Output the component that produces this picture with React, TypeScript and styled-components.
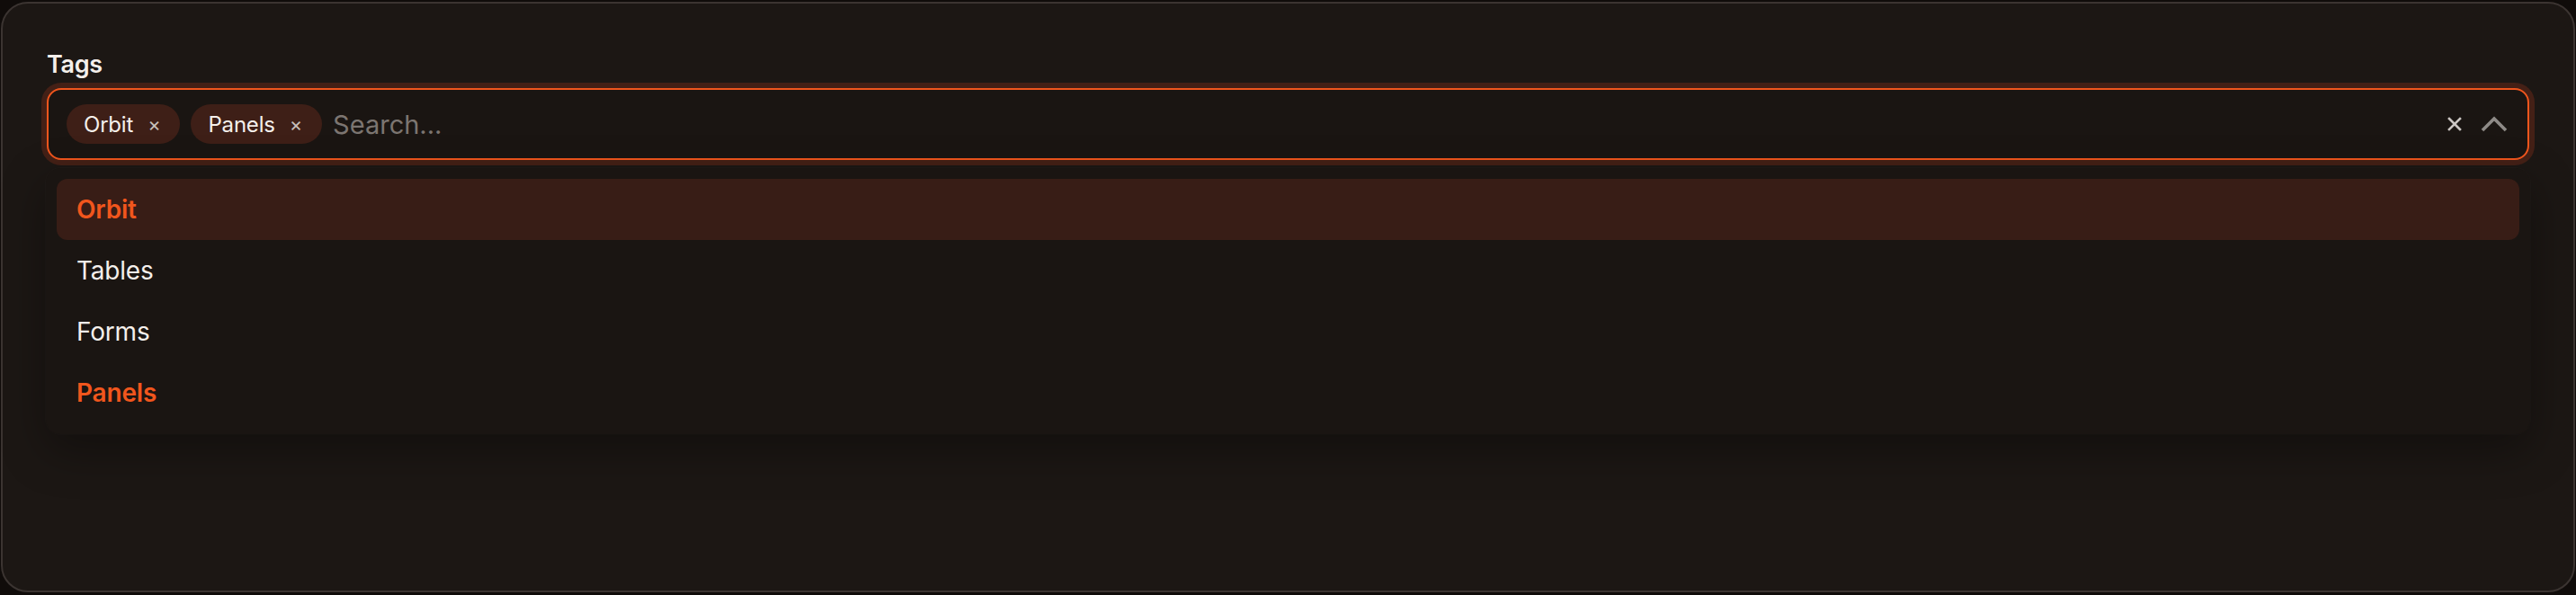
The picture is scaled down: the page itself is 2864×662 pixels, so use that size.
import { useState } from "react";
import styled, { createGlobalStyle } from "styled-components";

const GlobalStyle = createGlobalStyle`
  html, body {
    margin: 0;
    padding: 0;
    background: #100c0a;
  }
  body {
    font-family: "Inter", "Lato", sans-serif;
  }
`;

const accent = "#f1561d";
const text = "#f4efeb";

interface Option {
  value: string;
  title: string;
}

const OPTIONS: Option[] = [
  { value: "orbit", title: "Orbit" },
  { value: "tables", title: "Tables" },
  { value: "forms", title: "Forms" },
  { value: "panels", title: "Panels" },
];

const Page = styled.div`
  padding: 2px 1px 3px;
`;

const Card = styled.div`
  box-sizing: border-box;
  height: 657px;
  border: 2px solid #3b3431;
  border-radius: 30px;
  background: #1c1714;
  padding: 51px 49px 0;
`;

const Label = styled.div`
  font-size: 27px;
  line-height: 34px;
  font-weight: 600;
  letter-spacing: -0.3px;
  color: ${text};
  margin-bottom: 9px;
`;

const Field = styled.div`
  position: relative;
`;

const Control = styled.div`
  box-sizing: border-box;
  height: 80px;
  display: flex;
  align-items: center;
  gap: 12px;
  padding: 0 22px 0 20px;
  border: 2px solid ${accent};
  border-radius: 16px;
  background: #1a1512;
  box-shadow: 0 0 0 6px #442016;
`;

const Chip = styled.span`
  display: inline-flex;
  align-items: center;
  gap: 16px;
  height: 44px;
  padding: 0 22px 0 19px;
  border-radius: 22px;
  background: #3e1f17;
  color: ${text};
  font-size: 24px;
  letter-spacing: -0.2px;
  flex-shrink: 0;
`;

const ChipRemove = styled.span`
  font-size: 22px;
  line-height: 1;
  color: #c7bfba;
`;

const SearchInput = styled.input`
  flex: 1;
  min-width: 0;
  border: none;
  outline: none;
  background: transparent;
  color: ${text};
  font-family: inherit;
  font-size: 29px;
  padding: 0;
  &::placeholder {
    color: #7c7571;
  }
`;

const Actions = styled.div`
  display: flex;
  align-items: center;
  gap: 21px;
`;

const IconButton = styled.span`
  display: inline-flex;
  align-items: center;
  justify-content: center;
`;

const Menu = styled.div`
  position: absolute;
  left: -1px;
  right: -1px;
  top: calc(100% + 9px);
  padding: 12px;
  border-radius: 16px;
  background: #1a1512;
  box-shadow: 0 18px 50px rgba(0, 0, 0, 0.35), 0 0 0 1px rgba(255, 255, 255, 0.015);
`;

const Item = styled.div<{ $active?: boolean; $selected?: boolean }>`
  height: 68px;
  display: flex;
  align-items: center;
  padding: 0 22px;
  border-radius: 12px;
  font-size: 28px;
  letter-spacing: -0.2px;
  font-weight: ${(p) => (p.$selected ? 600 : 400)};
  color: ${(p) => (p.$selected ? accent : text)};
  background: ${(p) => (p.$active ? "#381d16" : "transparent")};
`;

function ClearIcon() {
  return (
    <svg width="16" height="16" viewBox="0 0 16 16">
      <path d="M2 2 L14 14 M14 2 L2 14" stroke="#cbc6c3" strokeWidth="2.6" strokeLinecap="square" />
    </svg>
  );
}

function ChevronUpIcon() {
  return (
    <svg width="30" height="18" viewBox="0 0 30 18">
      <path d="M2 16 L15 3 L28 16" fill="none" stroke="#8e8a87" strokeWidth="3.6" />
    </svg>
  );
}

export default function App() {
  const [selected] = useState<string[]>(["orbit", "panels"]);
  const [active] = useState("orbit");

  return (
    <Page>
      <GlobalStyle />
      <Card>
        <Label>Tags</Label>
        <Field>
          <Control>
            {selected.map((v) => (
              <Chip key={v}>
                {OPTIONS.find((o) => o.value === v)?.title}
                <ChipRemove>×</ChipRemove>
              </Chip>
            ))}
            <SearchInput placeholder="Search..." />
            <Actions>
              <IconButton>
                <ClearIcon />
              </IconButton>
              <IconButton>
                <ChevronUpIcon />
              </IconButton>
            </Actions>
          </Control>
          <Menu>
            {OPTIONS.map((o) => (
              <Item
                key={o.value}
                $active={o.value === active}
                $selected={selected.includes(o.value)}
              >
                {o.title}
              </Item>
            ))}
          </Menu>
        </Field>
      </Card>
    </Page>
  );
}
